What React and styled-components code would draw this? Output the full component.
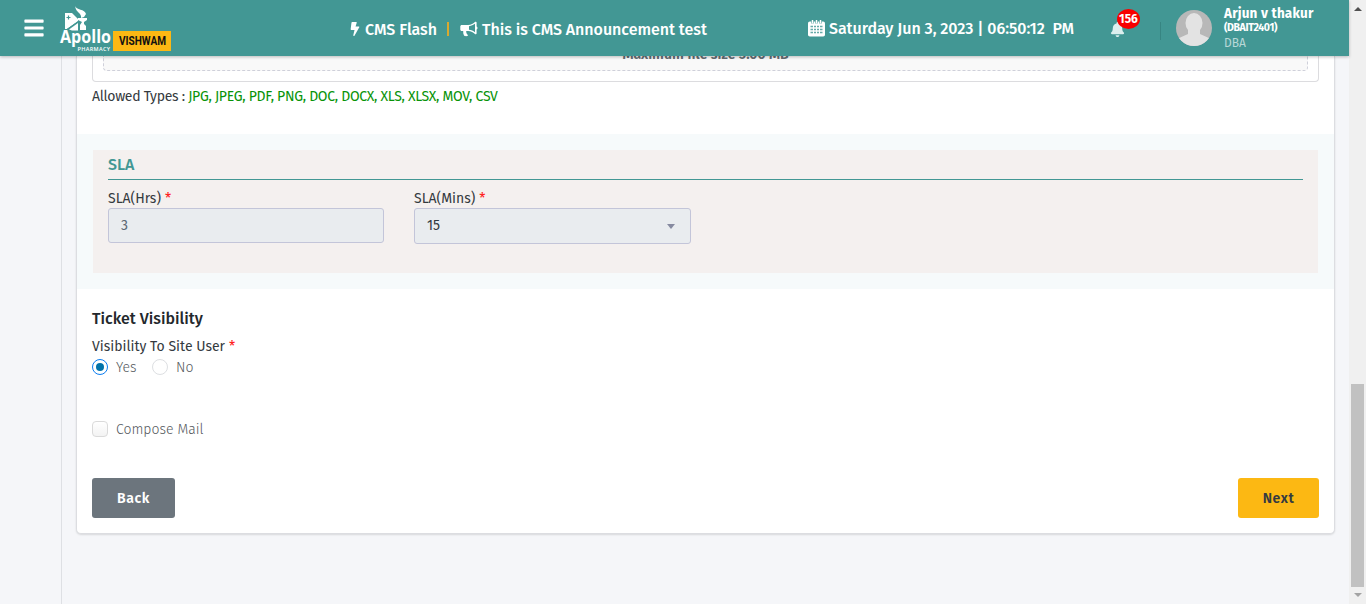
import React from "react";
import styled, { createGlobalStyle } from "styled-components";
import { FaBars, FaBolt, FaBell } from "react-icons/fa";

const Global = createGlobalStyle`
  * { box-sizing: border-box; }
  body { margin: 0; overflow: hidden; background: #f5f6f9; font-family: "Fira Sans", "Open Sans", "Noto Sans", sans-serif; color: #343a40; font-size: 14px; }
`;

const Label = styled.span`
  white-space: pre;
  letter-spacing: ${(p) => p.$ls || 0}px;
`;
const Window = styled.div`display: flex; width: 1366px; height: 604px; overflow: hidden;`;
const Page = styled.div`display: flex; flex-direction: column; width: 1349px;`;
const Header = styled.header`
  display: flex; align-items: center; height: 56px; flex: none; background: #429794; color: #fff;
  box-shadow: 0 1px 3px rgba(0,0,0,.25); position: relative; z-index: 1;
`;
const MenuButton = styled.div`display: flex; margin-left: 23px; width: 35px; font-size: 22px;`;
const Brand = styled.div`display: flex; align-items: flex-end; width: 290px; height: 48px; margin-top: 4px;`;
const BrandTag = styled.svg`width: 58px; height: 20px; background: #fcb813; margin-bottom: 3px;`;
const News = styled.div`display: flex; align-items: center; width: 460px; font-size: 16px; font-weight: 500; margin-top: 2px;`;
const Pipe = styled.span`width: 2px; height: 14px; margin: 0 11px 0 10px; background: #d9a92f;`;
const Clock = styled.div`display: flex; align-items: center; width: 302px; font-size: 16px; font-weight: 500; svg { margin-right: 4px; }`;
const BellBox = styled.div`position: relative; display: flex; width: 51px; height: 18px; font-size: 15px; color: #dcefee; margin-top: 5px; border-right: 1px solid #378582;`;
const Badge = styled.span`
  position: absolute; left: 7px; top: -13px; width: 23px; height: 20px; border-radius: 50%;
  background: #f80000; color: #fff; font-weight: 700; font-size: 12px; line-height: 20px; text-align: center;
`;
const Avatar = styled.svg`width: 36px; height: 36px; margin-left: 15px;`;
const User = styled.div`display: flex; flex-direction: column; margin-left: 12px; height: 44px;`;
const UserName = styled.span`font-size: 13.5px; font-weight: 700; line-height: 15px;`;
const UserId = styled.span`font-size: 10.5px; font-weight: 700; line-height: 13px;`;
const UserRole = styled.span`font-size: 12px; line-height: 18px; color: #b9d8d7;`;

const Body = styled.div`display: flex; flex: 1; overflow: hidden;`;
const Rail = styled.div`width: 62px; flex: none; border-right: 1px solid #dee0e4;`;
const Card = styled.main`
  display: flex; flex-direction: column; width: 1259px; height: 478px; margin-left: 14px; background: #fff;
  border: 1px solid #dcdde1; border-top: 0; border-radius: 0 0 5px 5px; box-shadow: 0 1px 2px rgba(0,0,0,.12);
`;
const Upload = styled.div`height: 26px; margin: 0 15px; padding: 0 10px 10px; border: 1px solid #dcdcdf; border-top: 0; border-radius: 0 0 4px 4px;`;
const DropZone = styled.div`
  display: flex; justify-content: center; height: 15px; background: #f9f9f9;
  border: 1px dashed #cfd0da; border-top: 0; border-radius: 0 0 4px 4px;
  font-size: 14px; font-weight: 600; line-height: 18px; color: #646c72;
  span { margin-top: -10px; }
`;
const Allowed = styled.p`display: flex; margin: 5px 15px 0; height: 47px; line-height: 20px; color: #343a40; span + span { color: #089308; }`;
const SlaBand = styled.section`height: 155px; padding: 16px; background: #f6fafb;`;
const SlaPanel = styled.div`height: 123px; padding: 0 15px; background: #f4f0ef;`;
const SlaTitle = styled.h2`margin: 0 0 8px; height: 30px; border-bottom: 1px solid #429794; font-size: 16px; font-weight: 500; line-height: 30px; color: #429794;`;
const Fields = styled.div`display: flex; align-items: flex-start; gap: 30px;`;
const Field = styled.div`display: flex; flex-direction: column; width: ${(p) => p.$w}px;`;
const FieldLabel = styled.label`height: 20px; line-height: 21px;`;
const Star = styled.span`color: #f22; margin-left: 4px;`;
const Control = styled.div`
  display: flex; align-items: center; justify-content: space-between; height: ${(p) => p.$h}px; padding: 0 15px 1px 12px;
  background: #e9ecef; border: 1px solid #c3c5d9; border-radius: 3px; color: ${(p) => p.$c};
`;
const Caret = styled.span`border: 4.5px solid transparent; border-top: 5px solid #868aa0; border-bottom: 0; margin-top: 1px;`;
const Visibility = styled.section`display: flex; flex-direction: column; padding: 19px 15px 0;`;
const SectionTitle = styled.h3`margin: 0; height: 20px; font-size: 16px; font-weight: 500; line-height: 22px; color: #23282c;`;
const Question = styled.div`margin-top: 9px; height: 19px; line-height: 20px;`;
const Options = styled.div`display: flex; height: 22px; margin-top: ${(p) => p.$mt || 0}px; color: #55595d; font-weight: 300;`;
const Option = styled.label`display: flex; align-items: center; gap: 8px; width: ${(p) => p.$w || 200}px; line-height: 20px; ${Label} { padding-top: 2px; }`;
const Radio = styled.span`
  display: flex; align-items: center; justify-content: center; width: 16px; height: 16px; border-radius: 50%;
  border: 1px solid ${(p) => (p.$on ? "#0b7df0" : "#dddfe2")};
  &::after { content: ""; width: 8px; height: 8px; border-radius: 50%; background: ${(p) => (p.$on ? "#0073aa" : "transparent")}; }
`;
const Check = styled.span`width: 16px; height: 16px; border: 1px solid #dadada; border-radius: 4px; background: linear-gradient(#fff, #f3f3f3);`;
const Actions = styled.div`display: flex; justify-content: space-between; margin-top: 38px;`;
const Button = styled.button`
  width: ${(p) => p.$w}px; height: 40px; padding: 0; border: 0; border-radius: 3px; background: ${(p) => p.$bg}; color: ${(p) => p.$c};
  font: inherit; font-weight: 600; letter-spacing: .6px;
`;
const Scrollbar = styled.div`display: flex; flex-direction: column; align-items: center; width: 17px; padding: 7px 0; background: #f0f0f0;`;
const Arrow = styled.span`
  border: 4px solid transparent;
  ${(p) => (p.$up ? "border-bottom-color: #505050; border-top: 0;" : "border-top-color: #a3a3a3; border-bottom: 0;")}
`;
const Thumb = styled.div`width: 13px; height: 203px; margin: 373px 0 6px; background: #c1c1c1;`;

function Logo() {
  return (
    <svg width="55" height="48" viewBox="-2 0 55 48" fill="#fff">
      <path d="M5 7 12 7 18 13V15L7 23 5 23Z" />
      <path d="M15 0C16 4 25 3 26 8L24 11 21 12C22 7 16 7 15 0Z" />
      <path d="M18 12H27V14L24 16V18L26 20V24H20V19L22 16 18 14Z" />
      <path d="M9 23.500 18 17V24.500H12Z" />
      <path d="M8.500 9.500v4M6.500 11.500h4" stroke="#429794" strokeWidth="1.200" />
      <path d="M6 24 18.500 15.500" stroke="#429794" strokeWidth="1" />
      <text x="0" y="37.200" textLength="51" lengthAdjust="spacingAndGlyphs" fontFamily="Open Sans" fontWeight="700" fontSize="18.500">Apollo</text>
      <text x="17.500" y="44.800" textLength="32.500" fontFamily="Open Sans" fontWeight="600" fontSize="5.500">PHARMACY</text>
    </svg>
  );
}

function Bullhorn() {
  return (
    <svg width="18" height="16" viewBox="0 0 18 16" fill="#fff">
      <path d="M1.800 4H8V10H6.200C6 12 7 13.200 8.200 14.300C7.200 15.500 4.500 15.400 3.900 14.300C3.300 12.800 3 11.500 3.200 10H1.800C.9 10 .3 9.400 .3 8.500V5.500C.3 4.600 .9 4 1.800 4Z" />
      <path fillRule="evenodd" d="M8 4C11 4 13.500 2.500 15.200.8C16 .4 16.600.8 16.600 1.500V5.500C17.800 6 17.800 8 16.600 8.500V12.500C16.600 13.200 16 13.600 15.200 13.200C13.500 11.500 11 10 8 10ZM9 5.200V8.800C11.300 9 13.300 10 15 11.200V2.800C13.300 4 11.300 5 9 5.200Z" />
    </svg>
  );
}

function Calendar() {
  return (
    <svg width="17" height="17" viewBox="0 0 17 17">
      <rect x="0" y="1.500" width="17" height="15" rx="1.800" fill="#fff" />
      <path d="M4.500 0V3.500M8.500 0V3.500M12.500 0V3.500" stroke="#429794" strokeWidth="2.400" />
      <path d="M4.500 0V3.500M8.500 0V3.500M12.500 0V3.500" stroke="#fff" strokeWidth="1.500" />
      <path d="M2.500 6.500H5M6 6.500H8M9 6.500H11M12 6.500H14.500M2.500 9.500H5M6 9.500H8M9 9.500H11M12 9.500H14.500M2.500 12.500H5M6 12.500H8M9 12.500H11M12 12.500H14.500" stroke="#429794" strokeWidth="1.300" opacity=".8" />
    </svg>
  );
}

export default function App() {
  return (
    <Window>
      <Global />
      <Page>
        <Header>
          <MenuButton><FaBars /></MenuButton>
          <Brand>
            <Logo />
            <BrandTag viewBox="0 0 58 20"><text x="6" y="14.300" textLength="47" lengthAdjust="spacingAndGlyphs" fontFamily="Roboto" fontWeight="700" fontSize="12" fill="#111">VISHWAM</text></BrandTag>
          </Brand>
          <News>
            <FaBolt size={14} /><Label>{"\u200a\u200a\u200a"}CMS Flash</Label>
            <Pipe />
            <Bullhorn /><Label $ls={-0.04}>{" "}This is CMS Announcement test</Label>
          </News>
          <Clock><Calendar /><Label $ls={-0.07}>Saturday Jun 3, 2023 | 06:50:12  PM</Label></Clock>
          <BellBox><FaBell /><Badge>156</Badge></BellBox>
          <Avatar viewBox="0 0 36 36">
            <clipPath id="face"><circle cx="18" cy="18" r="18" /></clipPath>
            <g clipPath="url(#face)"><rect width="36" height="36" fill="#b8b8b8" /><ellipse cx="18" cy="13" rx="8.500" ry="10" fill="#e3e3e3" /><path d="M12 18h12v6l11 5v7H1v-7l11-5Z" fill="#e3e3e3" /></g>
          </Avatar>
          <User><UserName><Label $ls={0.2}>Arjun v thakur</Label></UserName><UserId><Label $ls={-0.35}>(DBAIT2401)</Label></UserId><UserRole>DBA</UserRole></User>
        </Header>
        <Body>
          <Rail />
          <Card>
            <Upload><DropZone><Label>Maximum file size 5.00 MB</Label></DropZone></Upload>
            <Allowed><Label $ls={-0.3}>{"Allowed Types : "}</Label><Label $ls={-0.31}>JPG, JPEG, PDF, PNG, DOC, DOCX, XLS, XLSX, MOV, CSV</Label></Allowed>
            <SlaBand>
              <SlaPanel>
                <SlaTitle>SLA</SlaTitle>
                <Fields>
                  <Field $w={276}><FieldLabel><Label>SLA(Hrs)</Label><Star>*</Star></FieldLabel><Control $h={35} $c="#5c6873">3</Control></Field>
                  <Field $w={277}><FieldLabel><Label>SLA(Mins)</Label><Star>*</Star></FieldLabel><Control $h={36} $c="#343a40">15<Caret /></Control></Field>
                </Fields>
              </SlaPanel>
            </SlaBand>
            <Visibility>
              <SectionTitle><Label>Ticket Visibility</Label></SectionTitle>
              <Question><Label>Visibility To Site User</Label><Star>*</Star></Question>
              <Options><Option $w={60}><Radio $on /><Label>Yes</Label></Option><Option><Radio /><Label>No</Label></Option></Options>
              <Options $mt={40}><Option><Check /><Label>Compose Mail</Label></Option></Options>
              <Actions><Button $w={83} $bg="#6c757d" $c="#fff">Back</Button><Button $w={81} $bg="#fcb813" $c="#343a40">Next</Button></Actions>
            </Visibility>
          </Card>
        </Body>
      </Page>
      <Scrollbar><Arrow $up /><Thumb /><Arrow /></Scrollbar>
    </Window>
  );
}
